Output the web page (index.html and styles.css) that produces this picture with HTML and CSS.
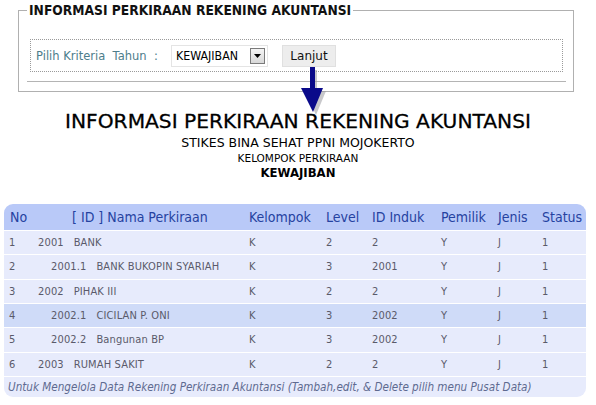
FILE: index.html
```html
<!DOCTYPE html>
<html>
<head>
<meta charset="utf-8">
<link rel="stylesheet" href="styles.css">
</head>
<body>
<fieldset class="panel">
  <legend class="panel-title">INFORMASI PERKIRAAN REKENING AKUNTANSI</legend>
  <div class="criteria">
    <span class="label">Pilih Kriteria&nbsp; Tahun&nbsp; :</span>
    <span class="select"><span class="select-text">KEWAJIBAN</span><span class="select-btn"><svg width="7" height="4" viewBox="0 0 7 4"><path d="M0 0H7L3.5 4Z" fill="#000"/></svg></span></span>
    <span class="button">Lanjut</span>
  </div>
  <div class="rule"></div>
</fieldset>
<svg class="arrow" width="40" height="52" viewBox="0 0 40 52">
  <path d="M12 3H17V24H26L16 48L5 24H12Z" fill="#9a9aa0" opacity="0.55"/>
  <path d="M10 0H15V21H23L13 45L1 21H10Z" fill="#0a0a8a"/>
</svg>
<div class="heading">
  <div class="h-main">INFORMASI PERKIRAAN REKENING AKUNTANSI</div>
  <div class="h-sub">STIKES BINA SEHAT PPNI MOJOKERTO</div>
  <div class="h-small">KELOMPOK PERKIRAAN</div>
  <div class="h-bold">KEWAJIBAN</div>
</div>
<table class="data">
  <colgroup>
    <col class="w-no"><col class="w-name"><col class="w-kel"><col class="w-lev"><col class="w-ind"><col class="w-pem"><col class="w-jen"><col class="w-sta">
  </colgroup>
  <thead>
    <tr>
      <th class="first">No</th>
      <th class="name">[ ID ] Nama Perkiraan</th>
      <th>Kelompok</th>
      <th>Level</th>
      <th>ID Induk</th>
      <th>Pemilik</th>
      <th>Jenis</th>
      <th class="last">Status</th>
    </tr>
  </thead>
  <tbody>
    <tr><td>1</td><td class="lvl2">2001&nbsp;&nbsp; BANK</td><td>K</td><td>2</td><td>2</td><td>Y</td><td>J</td><td>1</td></tr>
    <tr><td>2</td><td class="lvl3">2001.1&nbsp;&nbsp; BANK BUKOPIN SYARIAH</td><td>K</td><td>3</td><td>2001</td><td>Y</td><td>J</td><td>1</td></tr>
    <tr><td>3</td><td class="lvl2">2002&nbsp;&nbsp; PIHAK III</td><td>K</td><td>2</td><td>2</td><td>Y</td><td>J</td><td>1</td></tr>
    <tr class="hl"><td>4</td><td class="lvl3">2002.1&nbsp;&nbsp; CICILAN P. ONI</td><td>K</td><td>3</td><td>2002</td><td>Y</td><td>J</td><td>1</td></tr>
    <tr><td>5</td><td class="lvl3">2002.2&nbsp;&nbsp; Bangunan BP</td><td>K</td><td>3</td><td>2002</td><td>Y</td><td>J</td><td>1</td></tr>
    <tr><td>6</td><td class="lvl2">2003&nbsp;&nbsp; RUMAH SAKIT</td><td>K</td><td>2</td><td>2</td><td>Y</td><td>J</td><td>1</td></tr>
  </tbody>
  <tfoot>
    <tr><td colspan="8" class="note">Untuk Mengelola Data Rekening Perkiraan Akuntansi (Tambah,edit, &amp; Delete pilih menu Pusat Data)</td></tr>
  </tfoot>
</table>
</body>
</html>
```
FILE: styles.css
```css
html, body {
  margin: 0;
  padding: 0;
  background: #fff;
  font-family: "DejaVu Sans Condensed", "DejaVu Sans", sans-serif;
}
body {
  position: relative;
  width: 596px;
  height: 405px;
  overflow: hidden;
}
.panel {
  margin: 2px 22px 0 18px;
  padding: 0 8px 9px 8px;
  border: 1px solid #b0b0b0;
  min-width: 0;
}
.panel-title {
  padding: 0 2px;
  font-size: 13.7px;
  line-height: 16px;
  font-weight: bold;
  color: #111;
}
.criteria {
  margin: 21px 2px 0 3px;
  height: 31px;
  border: 1px dotted #9a9a9a;
  display: flex;
  align-items: center;
  padding-left: 5px;
}
.label {
  font-family: "DejaVu Sans", sans-serif;
  font-size: 11.5px;
  color: #4d7d8b;
  width: 135px;
  white-space: nowrap;
}
.select {
  display: flex;
  align-items: center;
  box-sizing: border-box;
  width: 97px;
  height: 22px;
  border: 1px solid #e4e4e4;
  background: #fff;
  padding: 0 2px 0 4px;
}
.select-text {
  flex: 1;
  font-size: 12.3px;
  color: #000;
}
.select-btn {
  box-sizing: border-box;
  width: 15px;
  height: 16px;
  border: 1px solid #7a7a7a;
  background: linear-gradient(#f4f4f4, #d8d8d8);
  display: flex;
  align-items: center;
  justify-content: center;
}
.button {
  margin-left: 14px;
  box-sizing: border-box;
  width: 54px;
  height: 22px;
  background: #ededed;
  border: 1px solid #e0e0e0;
  font-family: "DejaVu Sans", sans-serif;
  font-size: 12px;
  color: #111;
  display: flex;
  align-items: center;
  justify-content: center;
}
.rule {
  margin: 9px -1px 0 0;
  height: 0;
  border-top: 1px solid #b4b4b4;
}
.arrow {
  position: absolute;
  left: 300px;
  top: 67px;
}
.heading {
  margin-top: 16px;
  text-align: center;
  color: #000;
  font-family: "DejaVu Sans", sans-serif;
}
.h-main {
  font-size: 20.2px;
  line-height: 26px;
  -webkit-text-stroke: 0.3px #000;
}
.h-sub {
  font-size: 12.5px;
  line-height: 16px;
  padding-top: 1px;
}
.h-small {
  font-size: 10.5px;
  line-height: 14px;
}
.h-bold {
  font-family: "DejaVu Sans Condensed", sans-serif;
  font-size: 13px;
  font-weight: bold;
  line-height: 16px;
}
.data {
  margin: 23px 0 0 4px;
  width: 582px;
  table-layout: fixed;
  border-collapse: separate;
  border-spacing: 0;
  font-size: 11px;
  letter-spacing: 0.15px;
  color: #5a5a6a;
}
.w-no { width: 31px; }
.w-name { width: 214px; }
.w-kel { width: 77px; }
.w-lev { width: 46px; }
.w-ind { width: 69px; }
.w-pem { width: 57px; }
.w-jen { width: 44px; }
.w-sta { width: 44px; }
.data th {
  background: #b9c9f8;
  color: #2542a0;
  font-weight: normal;
  font-size: 14px;
  letter-spacing: 0;
  text-align: left;
  height: 26px;
  padding: 0;
  white-space: nowrap;
}
.data th.first { border-top-left-radius: 9px; padding-left: 6px; }
.data th.last { border-top-right-radius: 9px; }
.data th.name { padding-left: 37px; }
.data td {
  background: #e7ebfc;
  height: 23.34px;
  padding: 0;
  border-top: 1px solid #fff;
  white-space: nowrap;
}
.data td:first-child { padding-left: 5px; }
.data tr.hl td { background: #cfdbf8; }
.data td.lvl2 { padding-left: 3px; }
.data td.lvl3 { padding-left: 16px; }
.data td.note {
  font-style: italic;
  color: #5e6a90;
  font-size: 11.6px;
  letter-spacing: 0;
  height: 20px;
  padding-left: 4px;
  border-bottom-left-radius: 9px;
  border-bottom-right-radius: 9px;
}
```
